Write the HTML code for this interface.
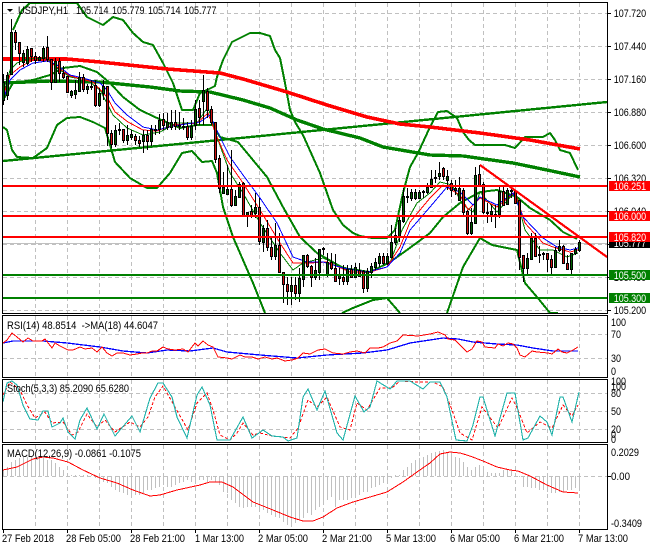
<!DOCTYPE html>
<html><head><meta charset="utf-8"><title>USDJPY,H1</title>
<style>
html,body{margin:0;padding:0;background:#fff;width:650px;height:550px;overflow:hidden}
svg{display:block}
text{font-family:"Liberation Sans",sans-serif;font-size:11px;fill:#000;dominant-baseline:auto}
polyline{shape-rendering:crispEdges}
</style></head><body>
<svg width="650" height="550" viewBox="0 0 650 550" xmlns="http://www.w3.org/2000/svg">
<defs>
<clipPath id="m"><rect x="3" y="3" width="604" height="310"/></clipPath>
<clipPath id="r"><rect x="3" y="316" width="604" height="61"/></clipPath>
<clipPath id="s"><rect x="3" y="380" width="604" height="62"/></clipPath>
<clipPath id="c"><rect x="3" y="445" width="604" height="84"/></clipPath>
</defs>
<rect width="650" height="550" fill="#fff"/>

<!-- grid -->
<g fill="none" stroke="#c0c0c0" stroke-width="1" stroke-dasharray="4 3" shape-rendering="crispEdges">
<path clip-path="url(#m)" d="M35.5 3V313M67.5 3V313M99.5 3V313M131.5 3V313M163.5 3V313M195.5 3V313M227.5 3V313M259.5 3V313M291.5 3V313M323.5 3V313M355.5 3V313M387.5 3V313M419.5 3V313M451.5 3V313M483.5 3V313M515.5 3V313M547.5 3V313M579.5 3V313"/>
<path clip-path="url(#m)" d="M3 13.5H607M3 46.5H607M3 79.5H607M3 112.5H607M3 145.5H607M3 178.5H607M3 211.5H607M3 244.5H607M3 277.5H607M3 310.5H607"/>
<path clip-path="url(#r)" d="M35.5 316V377M67.5 316V377M99.5 316V377M131.5 316V377M163.5 316V377M195.5 316V377M227.5 316V377M259.5 316V377M291.5 316V377M323.5 316V377M355.5 316V377M387.5 316V377M419.5 316V377M451.5 316V377M483.5 316V377M515.5 316V377M547.5 316V377M579.5 316V377M3 334.5H607M3 358.5H607"/>
<path clip-path="url(#s)" d="M35.5 380V442M67.5 380V442M99.5 380V442M131.5 380V442M163.5 380V442M195.5 380V442M227.5 380V442M259.5 380V442M291.5 380V442M323.5 380V442M355.5 380V442M387.5 380V442M419.5 380V442M451.5 380V442M483.5 380V442M515.5 380V442M547.5 380V442M579.5 380V442M3 393.5H607M3 411.5H607M3 429.5H607"/>
<path clip-path="url(#c)" d="M35.5 445V529M67.5 445V529M99.5 445V529M131.5 445V529M163.5 445V529M195.5 445V529M227.5 445V529M259.5 445V529M291.5 445V529M323.5 445V529M355.5 445V529M387.5 445V529M419.5 445V529M451.5 445V529M483.5 445V529M515.5 445V529M547.5 445V529M579.5 445V529M3 476.5H607"/>
</g>

<!-- main chart -->
<g clip-path="url(#m)" fill="none" stroke-linejoin="round">
<!-- bid line -->
<path d="M3 243.5H607" stroke="#c0c0c0" shape-rendering="crispEdges"/>
<!-- trend line -->
<polyline points="3,161 220,140 607,102" stroke="#008000" stroke-width="2.4"/>
<!-- bollinger -->
<g stroke="#008000" stroke-width="2">
<polyline points="13,30 22,10 30,3 77,3 87,17 103,25 113,17 123,20 133,33 143,42 153,45 163,63 173,83 182,110 193,110 200,93 207,90 215,86 217,77 223,60 232,42 240,38 250,33 260,33 270,36 275,50 280,58 285,83 290,110 295,122 303,135 320,173 333,210 343,225 353,233 360,236 372,238 387,238 395,230 403,193 410,167 418,153 430,127 438,112 447,111 457,118 463,132 469,140 475,145 490,145 505,145 515,148 525,137 530,137 543,137 550,133 555,140 560,150 570,153 578,170"/>
<polyline points="3,127 7,130 12,150 17,157 33,158 47,148 57,125 67,118 80,117 93,122 105,128 115,162 130,178 147,188 157,188 170,173 182,153 192,151 202,162 212,161 217,173 223,207 233,237 253,283 265,313"/>
<polyline points="342,313 353,308 373,300 387,298 400,313"/>
<polyline points="447,313 463,267 480,238 492,245 517,250 525,283 537,297 550,313 558,313"/>
<polyline points="3,100 13,83 33,80 50,75 63,68 80,66 97,72 110,83 123,97 140,110 157,118 180,128 197,125 213,125 220,137 238,142 267,177 283,207 300,237 317,253 343,268 370,272 390,262 407,250 430,233 443,217 460,203 480,192 497,190 517,197 530,208 550,220 563,232 577,239"/>
</g>
<!-- thick MAs -->
<polyline points="3,83 50,81 100,82 150,87 180,91 210,92 243,100 270,108 297,120 323,129 360,138 383,147 430,155 463,156 513,163 547,170 580,177" stroke="#008000" stroke-width="3.4"/>
<polyline points="3,59 67,59 100,62 167,69 220,73 243,79 287,92 327,105 367,117 400,124 430,127 480,133 530,140 580,149" stroke="#ff0000" stroke-width="3.6"/>
<!-- thin MAs -->
<polyline stroke="#008000" stroke-width="1" points="4,93 10,70 17,63 27,59 47,58 57,68 70,77 87,80 100,90 113,115 127,128 143,135 160,132 177,123 197,123 208,107 218,140 230,173 243,193 260,223 280,253 293,270 303,263 323,258 343,267 367,273 390,263 402,230 417,203 430,193 440,182 452,185 463,205 473,212 480,192 497,212 515,192 525,230 540,250 553,250 567,257 578,253"/>
<polyline stroke="#ff0000" stroke-width="1" points="3,97 10,75 20,67 33,60 47,60 57,67 70,76 93,82 107,97 115,112 128,122 143,130 157,131 173,125 197,123 208,113 217,137 227,160 243,183 260,210 280,243 293,263 310,263 327,262 350,272 370,272 387,267 400,247 410,222 430,198 443,185 460,195 468,210 480,198 497,207 515,192 525,223 543,243 553,247 570,252 578,250"/>
<polyline stroke="#0000ff" stroke-width="1" points="3,100 10,80 20,70 33,63 47,61 57,65 70,75 83,78 100,83 107,90 115,103 127,115 143,127 157,130 173,126 200,122 210,115 218,133 230,157 243,175 260,198 277,223 293,257 307,262 323,262 343,268 367,272 387,267 400,253 410,230 430,207 447,187 460,192 473,205 480,197 497,205 513,193 523,217 543,238 557,247 570,250 578,248"/>
<!-- candle wicks -->
<path stroke="#000" stroke-width="1" shape-rendering="crispEdges" d="M3.5 74V105M7.5 72V100M11.5 19V74M15.5 30V50M19.5 42V65M23.5 50V67M27.5 46V65M31.5 48V62M35.5 52V64M39.5 56V61M43.5 46V62M47.5 36V62M51.5 59V90M55.5 58V82M59.5 58V82M63.5 66V79M67.5 76V92M71.5 90V98M75.5 80V99M79.5 72V92M83.5 74V92M87.5 84V94M91.5 80V90M95.5 80V107M99.5 88V107M103.5 80V100M107.5 86V146M111.5 130V148M115.5 125V147M119.5 123V135M123.5 129V143M127.5 125V145M131.5 130V140M135.5 134V145M139.5 136V147M143.5 130V153M147.5 130V150M151.5 125V146M155.5 125V135M159.5 114V134M163.5 113V130M167.5 113V130M171.5 110V130M175.5 110V130M179.5 112V130M183.5 118V130M187.5 122V140M191.5 120V140M195.5 100V130M199.5 100V125M203.5 75V125M207.5 88V118M211.5 106V125M215.5 122V163M219.5 155V193M223.5 172V194M227.5 165V195M231.5 150V207M235.5 190V206M239.5 182V198M243.5 182V216M247.5 212V227M251.5 205V218M255.5 193V218M259.5 198V245M263.5 225V252M267.5 220V251M271.5 238V260M275.5 223V260M279.5 233V272M283.5 272V303M287.5 277V305M291.5 277V305M295.5 277V300M299.5 268V302M303.5 255V287M307.5 254V268M311.5 265V287M315.5 258V280M319.5 249V280M323.5 247V255M327.5 253V277M331.5 253V270M335.5 254V282M339.5 268V285M343.5 265V285M347.5 265V285M351.5 265V278M355.5 263V278M359.5 263V277M363.5 270V293M367.5 268V292M371.5 263V278M375.5 258V270M379.5 253V267M383.5 253V265M387.5 253V265M391.5 225V258M395.5 228V245M399.5 215V242M403.5 188V223M407.5 188V203M411.5 189V201M415.5 189V200M419.5 190V199M423.5 190V198M427.5 183V194M431.5 170V188M435.5 170V183M439.5 162V180M443.5 167V180M447.5 170V190M451.5 180V197M455.5 180V195M459.5 177V200M463.5 188V217M467.5 210V235M471.5 208V235M475.5 167V223M479.5 165V187M483.5 182V214M487.5 203V223M491.5 205V222M495.5 205V228M499.5 185V218M503.5 187V205M507.5 188V205M511.5 187V198M515.5 190V204M519.5 200V270M523.5 255V282M527.5 253V275M531.5 233V260M535.5 233V257M539.5 246V263M543.5 252V260M547.5 253V272M551.5 255V275M555.5 247V268M559.5 240V252M563.5 245V264M567.5 255V270M571.5 253V275M575.5 247V255M579.5 240V252"/>
<!-- bull bodies -->
<path fill="#006000" stroke="#000" stroke-width="1" shape-rendering="crispEdges" d="M2.5 82.5h2v18h-2zM6.5 75.5h2v20h-2zM10.5 32.5h2v42h-2zM22.5 53.5h2v9h-2zM26.5 49.5h2v14h-2zM38.5 57.5h2v3h-2zM42.5 48.5h2v10h-2zM54.5 61.5h2v21h-2zM70.5 91.5h2v4h-2zM74.5 90.5h2v4h-2zM78.5 77.5h2v14h-2zM86.5 86.5h2v3h-2zM90.5 86.5h2v1h-2zM98.5 93.5h2v12h-2zM102.5 86.5h2v7h-2zM114.5 130.5h2v14h-2zM118.5 129.5h2v1h-2zM126.5 135.5h2v5h-2zM130.5 134.5h2v3h-2zM142.5 135.5h2v6h-2zM150.5 129.5h2v12h-2zM154.5 129.5h2v1h-2zM158.5 120.5h2v9h-2zM166.5 122.5h2v5h-2zM170.5 122.5h2v5h-2zM178.5 125.5h2v1h-2zM182.5 126.5h2v1h-2zM190.5 126.5h2v11h-2zM194.5 109.5h2v16h-2zM202.5 90.5h2v11h-2zM222.5 187.5h2v6h-2zM226.5 189.5h2v5h-2zM234.5 196.5h2v9h-2zM238.5 184.5h2v13h-2zM246.5 212.5h2v4h-2zM254.5 207.5h2v6h-2zM262.5 228.5h2v14h-2zM274.5 245.5h2v11h-2zM290.5 285.5h2v6h-2zM298.5 278.5h2v15h-2zM302.5 255.5h2v24h-2zM314.5 270.5h2v7h-2zM318.5 249.5h2v23h-2zM322.5 248.5h2v1h-2zM326.5 262.5h2v12h-2zM338.5 274.5h2v4h-2zM346.5 269.5h2v12h-2zM354.5 267.5h2v10h-2zM366.5 271.5h2v17h-2zM370.5 266.5h2v6h-2zM374.5 262.5h2v5h-2zM378.5 256.5h2v7h-2zM386.5 256.5h2v7h-2zM390.5 242.5h2v15h-2zM394.5 235.5h2v7h-2zM398.5 220.5h2v16h-2zM402.5 196.5h2v25h-2zM406.5 196.5h2v1h-2zM410.5 192.5h2v6h-2zM414.5 192.5h2v6h-2zM418.5 192.5h2v6h-2zM422.5 191.5h2v1h-2zM426.5 187.5h2v5h-2zM430.5 179.5h2v8h-2zM434.5 177.5h2v1h-2zM438.5 173.5h2v3h-2zM446.5 176.5h2v4h-2zM454.5 188.5h2v2h-2zM458.5 188.5h2v12h-2zM470.5 222.5h2v11h-2zM474.5 175.5h2v48h-2zM490.5 211.5h2v3h-2zM494.5 214.5h2v2h-2zM498.5 191.5h2v23h-2zM506.5 190.5h2v14h-2zM510.5 190.5h2v1h-2zM526.5 258.5h2v10h-2zM530.5 238.5h2v21h-2zM538.5 254.5h2v1h-2zM542.5 253.5h2v1h-2zM554.5 250.5h2v17h-2zM558.5 246.5h2v4h-2zM570.5 253.5h2v16h-2zM574.5 249.5h2v4h-2zM578.5 242.5h2v8h-2z"/>
<!-- bear bodies -->
<path fill="#d01010" stroke="#000" stroke-width="1" shape-rendering="crispEdges" d="M14.5 32.5h2v10h-2zM18.5 42.5h2v11h-2zM30.5 48.5h2v8h-2zM34.5 56.5h2v4h-2zM46.5 47.5h2v12h-2zM50.5 59.5h2v23h-2zM58.5 61.5h2v12h-2zM62.5 73.5h2v4h-2zM66.5 76.5h2v16h-2zM82.5 77.5h2v12h-2zM94.5 85.5h2v20h-2zM106.5 86.5h2v47h-2zM110.5 133.5h2v11h-2zM122.5 129.5h2v11h-2zM134.5 136.5h2v4h-2zM138.5 140.5h2v3h-2zM146.5 135.5h2v6h-2zM162.5 119.5h2v6h-2zM174.5 122.5h2v4h-2zM186.5 126.5h2v11h-2zM198.5 108.5h2v9h-2zM206.5 91.5h2v19h-2zM210.5 109.5h2v13h-2zM214.5 122.5h2v37h-2zM218.5 158.5h2v30h-2zM230.5 189.5h2v16h-2zM242.5 183.5h2v33h-2zM250.5 211.5h2v4h-2zM258.5 207.5h2v34h-2zM266.5 228.5h2v19h-2zM270.5 247.5h2v9h-2zM278.5 245.5h2v27h-2zM282.5 272.5h2v12h-2zM286.5 284.5h2v7h-2zM294.5 285.5h2v8h-2zM306.5 255.5h2v11h-2zM310.5 266.5h2v11h-2zM330.5 262.5h2v6h-2zM334.5 268.5h2v13h-2zM342.5 277.5h2v4h-2zM350.5 269.5h2v8h-2zM358.5 270.5h2v6h-2zM362.5 271.5h2v17h-2zM382.5 256.5h2v7h-2zM442.5 168.5h2v8h-2zM450.5 183.5h2v7h-2zM462.5 190.5h2v22h-2zM466.5 211.5h2v22h-2zM478.5 174.5h2v11h-2zM482.5 184.5h2v28h-2zM486.5 212.5h2v1h-2zM502.5 191.5h2v14h-2zM514.5 191.5h2v12h-2zM518.5 200.5h2v57h-2zM522.5 255.5h2v13h-2zM534.5 238.5h2v18h-2zM546.5 253.5h2v6h-2zM550.5 259.5h2v8h-2zM562.5 246.5h2v17h-2zM566.5 263.5h2v6h-2z"/>
<!-- levels -->
<path stroke="#ff0000" stroke-width="2" shape-rendering="crispEdges" d="M3 186H607M3 216H607M3 237H607"/>
<path stroke="#008000" stroke-width="2" shape-rendering="crispEdges" d="M3 275H607M3 298H607"/>
<path stroke="#ff0000" stroke-width="2.2" shape-rendering="crispEdges" d="M480 165L607 257"/>
</g>

<!-- RSI -->
<g clip-path="url(#r)" fill="none">
<polyline stroke="#0000ff" stroke-width="1.3" points="3,343 13,341 43,341 67,343 100,347 123,351 147,353 167,350 190,351 213,348 227,352 260,355 297,358 327,355 363,353 387,350 410,343 430,340 443,338 458,339 473,342 497,344 517,345 533,348 553,351 578,351"/>
<polyline stroke="#ff0000" stroke-width="1" points="3,343 7,340 12,333 17,337 23,342 28,338 33,341 42,341 45,339 52,348 55,343 60,346 68,350 73,350 80,347 85,349 92,348 97,352 102,347 107,353 112,356 117,353 123,353 130,355 137,354 142,353 147,353 152,351 157,351 163,347 168,349 175,350 183,349 188,352 195,343 198,346 203,341 208,345 213,347 218,357 227,358 232,359 240,355 245,357 252,357 258,359 265,357 272,359 277,358 285,361 292,360 298,358 303,353 310,354 318,350 325,349 333,353 343,354 350,352 357,351 365,353 370,348 378,348 383,347 390,343 397,341 403,335 418,336 430,334 438,332 445,335 448,339 455,340 462,347 467,352 472,349 477,341 482,342 485,347 495,348 498,344 503,346 508,343 513,344 517,348 520,355 525,357 532,351 537,352 548,353 552,354 558,349 562,352 567,353 573,350 578,347"/>
</g>

<!-- Stoch -->
<g clip-path="url(#s)" fill="none">
<polyline stroke="#ff0000" stroke-width="1" stroke-dasharray="3 2" points="3,395 10,382 20,390 27,405 35,418 45,412 52,423 63,422 72,435 78,432 87,414 97,427 105,420 115,432 130,422 140,427 148,417 155,397 163,386 175,407 188,430 197,403 207,393 213,410 220,435 230,440 237,433 243,423 253,435 260,433 272,436 290,438 298,428 308,400 317,407 327,397 340,427 350,430 357,403 367,410 380,388 392,388 400,381 417,382 433,382 443,387 452,410 460,433 472,440 482,407 498,428 512,398 518,410 527,433 540,422 552,428 563,405 572,416 578,405"/>
<polyline stroke="#20b2aa" stroke-width="1.1" points="3,402 7,383 12,381 17,385 23,405 30,419 38,420 43,411 48,411 52,427 60,423 63,418 68,432 75,439 80,420 87,408 97,429 104,414 115,436 132,416 140,432 150,398 158,383 163,383 172,397 177,417 187,438 197,395 202,387 210,405 217,440 230,440 243,417 252,438 263,430 272,436 283,437 288,441 297,438 303,397 308,389 317,410 325,391 337,433 343,440 355,396 364,412 370,407 377,381 390,389 397,381 410,381 423,389 430,382 440,382 447,397 456,440 467,441 473,425 480,397 483,397 495,436 507,393 515,393 523,440 528,438 540,416 547,422 552,435 560,397 563,397 572,422 579,392"/>
</g>

<!-- MACD -->
<g clip-path="url(#c)" fill="none">
<path stroke="#c0c0c0" stroke-width="1" shape-rendering="crispEdges" d="M3.5 476V470M7.5 476V467M11.5 476V462M15.5 476V460M19.5 476V458M23.5 476V457M27.5 476V457M31.5 476V456M35.5 476V457M39.5 476V457M43.5 476V458M47.5 476V460M51.5 476V460M55.5 476V463M59.5 476V467M63.5 476V470M67.5 476V473M71.5 476V475M75.5 476V475M79.5 476V475M83.5 476V475M87.5 476V475M91.5 476V475M95.5 476V478M99.5 476V480M103.5 476V482M107.5 476V483M111.5 476V487M115.5 476V490M119.5 476V492M123.5 476V493M127.5 476V495M131.5 476V497M135.5 476V495M139.5 476V495M143.5 476V493M147.5 476V490M151.5 476V490M155.5 476V488M159.5 476V487M163.5 476V485M167.5 476V487M171.5 476V487M175.5 476V485M179.5 476V483M183.5 476V482M187.5 476V480M191.5 476V482M195.5 476V482M199.5 476V480M203.5 476V480M207.5 476V482M211.5 476V480M215.5 476V482M219.5 476V485M223.5 476V492M227.5 476V493M231.5 476V500M235.5 476V503M239.5 476V507M243.5 476V508M247.5 476V507M251.5 476V507M255.5 476V507M259.5 476V508M263.5 476V510M267.5 476V513M271.5 476V515M275.5 476V517M279.5 476V518M283.5 476V522M287.5 476V525M291.5 476V527M295.5 476V523M299.5 476V520M303.5 476V518M307.5 476V513M311.5 476V515M315.5 476V510M319.5 476V507M323.5 476V505M327.5 476V500M331.5 476V497M335.5 476V507M339.5 476V500M343.5 476V500M347.5 476V500M351.5 476V498M355.5 476V497M359.5 476V495M363.5 476V492M367.5 476V492M371.5 476V488M375.5 476V487M379.5 476V485M383.5 476V483M387.5 476V482M391.5 476V478M395.5 476V475M399.5 476V475M403.5 476V470M407.5 476V467M411.5 476V463M415.5 476V460M419.5 476V458M423.5 476V457M427.5 476V455M431.5 476V453M435.5 476V452M439.5 476V451M443.5 476V450M447.5 476V452M451.5 476V453M455.5 476V457M459.5 476V458M463.5 476V462M467.5 476V467M471.5 476V470M475.5 476V467M479.5 476V465M483.5 476V467M487.5 476V472M491.5 476V473M495.5 476V473M499.5 476V473M503.5 476V470M507.5 476V470M511.5 476V470M515.5 476V475M519.5 476V477M523.5 476V487M527.5 476V487M531.5 476V488M535.5 476V488M539.5 476V490M543.5 476V490M547.5 476V492M551.5 476V493M555.5 476V493M559.5 476V492M563.5 476V492M567.5 476V490M571.5 476V490M575.5 476V488M579.5 476V490"/>
<polyline stroke="#ff0000" stroke-width="1" points="3,470 17,467 33,459 43,457 53,458 68,462 83,470 100,478 117,483 133,490 150,496 160,495 177,490 200,485 210,482 222,482 233,487 253,502 273,510 290,517 303,521 313,521 323,517 337,508 353,502 370,497 387,492 403,482 417,472 430,463 440,454 450,452 460,453 470,456 483,461 497,467 510,470 518,471 530,476 547,485 563,492 578,493"/>
</g>

<!-- frames -->
<g fill="#000" shape-rendering="crispEdges">
<rect x="2" y="2" width="606" height="1"/><rect x="2" y="313" width="606" height="1"/><rect x="2" y="2" width="1" height="312"/><rect x="607" y="2" width="1" height="312"/>
<rect x="2" y="315" width="606" height="1"/><rect x="2" y="377" width="606" height="1"/><rect x="2" y="315" width="1" height="63"/><rect x="607" y="315" width="1" height="63"/>
<rect x="2" y="379" width="606" height="1"/><rect x="2" y="442" width="606" height="1"/><rect x="2" y="379" width="1" height="64"/><rect x="607" y="379" width="1" height="64"/>
<rect x="2" y="444" width="606" height="1"/><rect x="2" y="529" width="606" height="1"/><rect x="2" y="444" width="1" height="86"/><rect x="607" y="444" width="1" height="86"/>
</g>
<!-- ticks -->
<path stroke="#000" shape-rendering="crispEdges" d="M608 13.5h3M608 46.5h3M608 79.5h3M608 112.5h3M608 145.5h3M608 178.5h3M608 211.5h3M608 244.5h3M608 277.5h3M608 310.5h3M608 476.5h3M3.5 530v3M67.5 530v3M131.5 530v3M195.5 530v3M259.5 530v3M323.5 530v3M387.5 530v3M451.5 530v3M515.5 530v3M579.5 530v3"/>

<!-- header labels -->
<polygon points="7,9 13,9 10,12" fill="#000"/>
<text x="18" y="14" textLength="50" lengthAdjust="spacingAndGlyphs">USDJPY,H1</text>
<text x="76" y="14" textLength="32.5" lengthAdjust="spacingAndGlyphs">105.714</text>
<text x="112" y="14" textLength="32.5" lengthAdjust="spacingAndGlyphs">105.779</text>
<text x="148" y="14" textLength="32.5" lengthAdjust="spacingAndGlyphs">105.714</text>
<text x="184" y="14" textLength="32.5" lengthAdjust="spacingAndGlyphs">105.777</text>
<text x="7" y="329" textLength="151" lengthAdjust="spacingAndGlyphs" xml:space="preserve">RSI(14) 48.8514  -&gt;MA(18) 44.6047</text>
<text x="7" y="392" textLength="122" lengthAdjust="spacingAndGlyphs">Stoch(5,3,3) 85.2090 65.6280</text>
<text x="7" y="457" textLength="134" lengthAdjust="spacingAndGlyphs">MACD(12,26,9) -0.0861 -0.1075</text>

<!-- price axis -->
<text x="613.7" y="17" textLength="32.5" lengthAdjust="spacingAndGlyphs">107.720</text>
<text x="613.7" y="50" textLength="32.5" lengthAdjust="spacingAndGlyphs">107.440</text>
<text x="613.7" y="83" textLength="32.5" lengthAdjust="spacingAndGlyphs">107.160</text>
<text x="613.7" y="116" textLength="32.5" lengthAdjust="spacingAndGlyphs">106.880</text>
<text x="613.7" y="149" textLength="32.5" lengthAdjust="spacingAndGlyphs">106.600</text>
<text x="613.7" y="182" textLength="32.5" lengthAdjust="spacingAndGlyphs">106.320</text>
<text x="613.7" y="215" textLength="32.5" lengthAdjust="spacingAndGlyphs">106.040</text>
<text x="613.7" y="281" textLength="32.5" lengthAdjust="spacingAndGlyphs">105.480</text>
<text x="613.7" y="314" textLength="32.5" lengthAdjust="spacingAndGlyphs">105.200</text>
<g shape-rendering="crispEdges">
<rect x="609" y="238" width="41" height="10" fill="#000"/>
<rect x="609" y="181" width="41" height="10" fill="#ff0000"/>
<rect x="609" y="211" width="41" height="10" fill="#ff0000"/>
<rect x="609" y="270" width="41" height="10" fill="#008000"/>
<rect x="609" y="293" width="41" height="10" fill="#008000"/>
</g>
<text x="613.7" y="247" textLength="32.5" lengthAdjust="spacingAndGlyphs" style="fill:#fff">105.777</text>
<rect x="609" y="232" width="41" height="10" fill="#ff0000" shape-rendering="crispEdges"/>
<text x="613.7" y="190" textLength="32.5" lengthAdjust="spacingAndGlyphs" style="fill:#fff">106.251</text>
<text x="613.7" y="220" textLength="32.5" lengthAdjust="spacingAndGlyphs" style="fill:#fff">106.000</text>
<text x="613.7" y="241" textLength="32.5" lengthAdjust="spacingAndGlyphs" style="fill:#fff">105.820</text>
<text x="613.7" y="279" textLength="32.5" lengthAdjust="spacingAndGlyphs" style="fill:#fff">105.500</text>
<text x="613.7" y="302" textLength="32.5" lengthAdjust="spacingAndGlyphs" style="fill:#fff">105.300</text>

<!-- indicator axes -->
<text x="611" y="326" textLength="15" lengthAdjust="spacingAndGlyphs">100</text>
<text x="611" y="338" textLength="10" lengthAdjust="spacingAndGlyphs">70</text>
<text x="611" y="362" textLength="10" lengthAdjust="spacingAndGlyphs">30</text>
<text x="611" y="375" textLength="5" lengthAdjust="spacingAndGlyphs">0</text>
<text x="611" y="385" textLength="15" lengthAdjust="spacingAndGlyphs">100</text>
<text x="611" y="390" textLength="15" lengthAdjust="spacingAndGlyphs">100</text>
<text x="611" y="397" textLength="10" lengthAdjust="spacingAndGlyphs">80</text>
<text x="611" y="415" textLength="10" lengthAdjust="spacingAndGlyphs">50</text>
<text x="611" y="433" textLength="10" lengthAdjust="spacingAndGlyphs">20</text>
<text x="611" y="438" textLength="5" lengthAdjust="spacingAndGlyphs">0</text>
<text x="611" y="443" textLength="5" lengthAdjust="spacingAndGlyphs">0</text>
<text x="611" y="456" textLength="28" lengthAdjust="spacingAndGlyphs">0.2029</text>
<text x="611" y="480" textLength="19" lengthAdjust="spacingAndGlyphs">0.00</text>
<text x="611" y="527" textLength="31" lengthAdjust="spacingAndGlyphs">-0.3409</text>

<!-- time axis -->
<text x="2" y="542" textLength="52" lengthAdjust="spacingAndGlyphs">27 Feb 2018</text>
<text x="66" y="542" textLength="55" lengthAdjust="spacingAndGlyphs">28 Feb 05:00</text>
<text x="130" y="542" textLength="55" lengthAdjust="spacingAndGlyphs">28 Feb 21:00</text>
<text x="195" y="542" textLength="49" lengthAdjust="spacingAndGlyphs">1 Mar 13:00</text>
<text x="258" y="542" textLength="50" lengthAdjust="spacingAndGlyphs">2 Mar 05:00</text>
<text x="322" y="542" textLength="50" lengthAdjust="spacingAndGlyphs">2 Mar 21:00</text>
<text x="386" y="542" textLength="50" lengthAdjust="spacingAndGlyphs">5 Mar 13:00</text>
<text x="450" y="542" textLength="50" lengthAdjust="spacingAndGlyphs">6 Mar 05:00</text>
<text x="514" y="542" textLength="50" lengthAdjust="spacingAndGlyphs">6 Mar 21:00</text>
<text x="578" y="542" textLength="50" lengthAdjust="spacingAndGlyphs">7 Mar 13:00</text>
</svg>
</body></html>
